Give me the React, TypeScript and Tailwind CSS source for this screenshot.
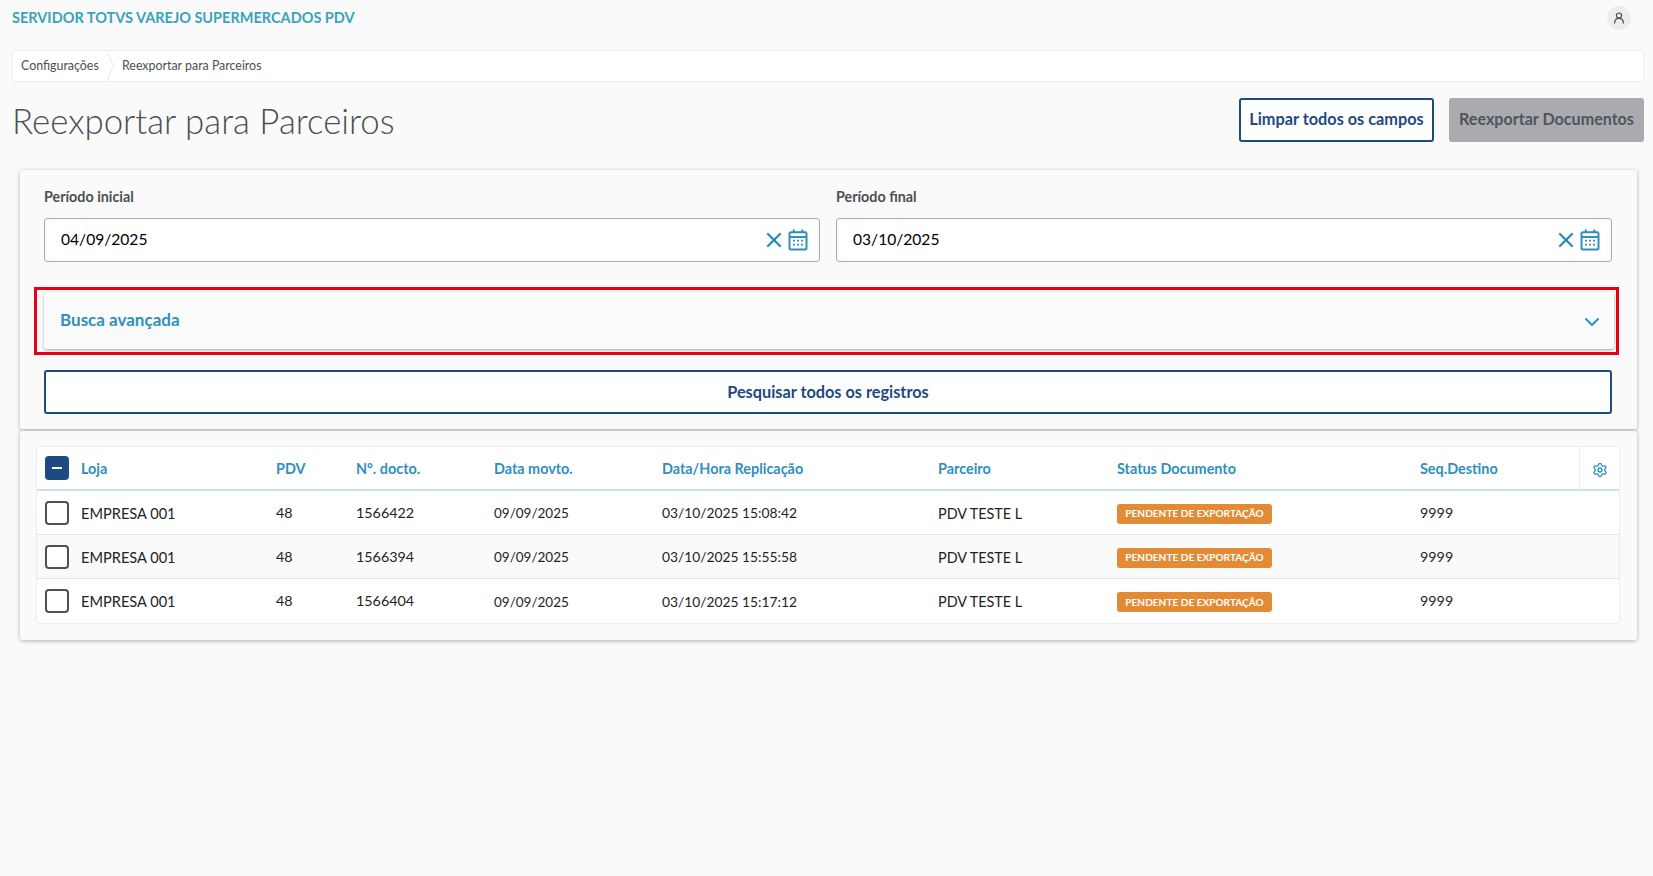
import { ChevronDown, Settings, X } from "lucide-react";

const rows = [
  { doc: "1566422", when: "03/10/2025 15:08:42", seq: "9999", bg: "bg-white" },
  { doc: "1566394", when: "03/10/2025 15:55:58", seq: "9999", bg: "bg-[#fafafa]" },
  { doc: "1566404", when: "03/10/2025 15:17:12", seq: "9999", bg: "bg-white" },
];

const CalendarIcon = () => (
  <svg width="20" height="22" viewBox="0 0 20 22" fill="none" stroke="#2f8fbd" strokeWidth="2">
    <rect x="1.5" y="3.2" width="17" height="17.3" rx="1.5" />
    <path d="M2 8h16M5.8 .6v3.4M14.2 .6v3.4" />
    <path d="M5 11.6h2M9 11.6h2M13 11.6h2M5 15.6h2M9 15.6h2M13 15.6h2" strokeWidth="1.8" />
  </svg>
);

const DateField = ({ label, value }: { label: string; value: string }) => (
  <div className="flex-1">
    <label className="block h-5 text-[14.3px] leading-5 font-bold text-[#4a5054]">{label}</label>
    <div className="mt-[11px] flex h-[44px] items-center rounded-[3px] border border-[#a5afb0] bg-white pr-[11px] pl-4 shadow-[inset_0_0_6px_rgba(0,0,0,0.06)]">
      <span className="flex-1 pb-[1px] text-[15.6px] text-black">{value}</span>
      <X size={24} strokeWidth={2.4} className="text-[#2f8fbd]" />
      <span className="ml-[2px]">
        <CalendarIcon />
      </span>
    </div>
  </div>
);

const Checkbox = ({ checked }: { checked?: boolean }) =>
  checked ? (
    <span className="flex h-6 w-6 items-center justify-center rounded-[4px] bg-[#1d4a80]">
      <span className="h-[2px] w-[10px] bg-white" />
    </span>
  ) : (
    <span className="block h-6 w-6 rounded-[4px] border-2 border-[#47535a] bg-white" />
  );

export default function App() {
  const line = (i: number) => (i < 2 ? "border-b border-[#e4e4e4]" : "");

  return (
    <div className="min-h-screen bg-[#fafafa] font-['Lato','Noto_Sans',sans-serif]">
      <header className="flex h-[35px] items-center justify-between pr-[22px] pl-[12px]">
        <span className="text-[14.5px] font-bold text-[#39a3bd]">SERVIDOR TOTVS VAREJO SUPERMERCADOS PDV</span>
        <span className="flex h-6 w-6 items-center justify-center rounded-full bg-[#ededed]">
          <svg width="12" height="12" viewBox="0 0 12 12" fill="none" stroke="#3f4a52" strokeWidth="1.2">
            <circle cx="6" cy="3.6" r="2.6" />
            <path d="M1.6 11.4c0-3.2 1.6-5 4.4-5s4.4 1.8 4.4 5" />
          </svg>
        </span>
      </header>

      <nav className="mt-[15px] mr-[9px] ml-[12px] flex h-[32px] items-center rounded-[3px] border border-[#ececec] bg-white text-[12.4px] text-[#4a5054]">
        <span className="w-[93px] pl-2">Configurações</span>
        <svg width="8" height="32" viewBox="0 0 8 32" fill="none" stroke="#e8e8e8">
          <path d="M.5 0l7 16-7 16" />
        </svg>
        <span className="ml-2">Reexportar para Parceiros</span>
      </nav>

      <div className="mt-4 mr-[9px] ml-[12px] flex h-[44px] items-center justify-between">
        <h1 className="h-[44px] pt-[1px] text-[34.8px] leading-[44px] font-light text-[#4a5054]">Reexportar para Parceiros</h1>
        <div className="flex gap-[15px]">
          <button className="h-[44px] w-[195px] rounded-[3px] border-2 border-[#1d4a80] bg-white pb-[1px] text-[16.3px] font-bold text-[#1d4a80]">
            Limpar todos os campos
          </button>
          <button className="h-[44px] w-[195px] rounded-[3px] bg-[#a9abb0] pb-[1px] text-[16.1px] font-bold text-[#50555a]">
            Reexportar Documentos
          </button>
        </div>
      </div>

      <section className="mt-[28px] mr-[16px] ml-[20px] h-[259px] rounded-[3px] bg-[#fafafa] pt-[17px] pr-[25px] pl-[24px] shadow-[0_1px_4px_rgba(0,0,0,0.3)]">
        <div className="flex gap-4">
          <DateField label="Período inicial" value="04/09/2025" />
          <DateField label="Período final" value="03/10/2025" />
        </div>

        <div className="mt-[25px] -mr-[7px] -ml-[10px] h-[68px] border-[3px] border-[#e60012] pt-[2px] pr-[2px] pl-[7px]">
          <div className="flex h-[57px] items-center justify-between rounded-[3px] bg-[#fbfbfb] pr-[10px] pb-[2px] pl-[16px] shadow-[0_1px_3px_rgba(0,0,0,0.35)]">
            <span className="text-[17px] font-bold text-[#2f8fbd]">Busca avançada</span>
            <ChevronDown size={24} strokeWidth={2} className="mt-[5px] text-[#2f8fbd]" />
          </div>
        </div>

        <button className="mt-[15px] h-[44px] w-full rounded-[3px] border-2 border-[#1d4a80] bg-white text-[16.3px] font-bold text-[#1d4a80]">
          Pesquisar todos os registros
        </button>
      </section>

      <section className="mt-[2px] mr-[16px] ml-[20px] h-[209px] rounded-[3px] bg-[#fafafa] pt-[15px] pl-[16px] shadow-[0_1px_4px_rgba(0,0,0,0.3)]">
        <table className="h-[177px] w-[1584px] table-fixed border-separate border-spacing-0 rounded-[3px] border border-[#ececec] text-[14.3px] text-[#1f2326]">
          <colgroup>
            <col className="w-[44px]" />
            <col className="w-[195px]" />
            <col className="w-[80px]" />
            <col className="w-[138px]" />
            <col className="w-[168px]" />
            <col className="w-[276px]" />
            <col className="w-[179px]" />
            <col className="w-[303px]" />
            <col className="w-[159px]" />
            <col className="w-[40px]" />
          </colgroup>
          <thead>
            <tr className="h-[44px] bg-white text-[14.4px] text-[#2f8fbd]">
              <th className="border-b-2 border-[#c5e2ee] pl-2 text-left">
                <Checkbox checked />
              </th>
              {["Loja", "PDV", "Nº. docto.", "Data movto.", "Data/Hora Replicação", "Parceiro", "Status Documento", "Seq.Destino"].map((h) => (
                <th key={h} className="border-b-2 border-[#c5e2ee] pt-[2px] text-left font-bold">
                  {h}
                </th>
              ))}
              <th className="border-b-2 border-l border-[#c5e2ee] border-l-[#ececec] text-center">
                <Settings size={16} strokeWidth={2} className="inline-block" />
              </th>
            </tr>
          </thead>
          <tbody>
            {rows.map((r, i) => (
              <tr key={r.doc} className={`h-[44px] ${r.bg}`}>
                <td className={`pl-2 ${line(i)}`}>
                  <Checkbox />
                </td>
                <td className={`pt-[2px] text-[14.6px] ${line(i)}`}>EMPRESA 001</td>
                <td className={line(i)}>48</td>
                <td className={line(i)}>{r.doc}</td>
                <td className={`pt-[2px] text-[13.5px] ${line(i)}`}>09/09/2025</td>
                <td className={`pt-[2px] text-[13.8px] ${line(i)}`}>{r.when}</td>
                <td className={`pt-[2px] text-[14.4px] ${line(i)}`}>PDV TESTE L</td>
                <td className={line(i)}>
                  <span className="inline-flex h-5 w-[155px] items-center justify-center rounded-[3px] bg-[#e38a34] text-[10.1px] font-bold text-white">
                    PENDENTE DE EXPORTAÇÃO
                  </span>
                </td>
                <td className={line(i)}>{r.seq}</td>
                <td className={line(i)} />
              </tr>
            ))}
          </tbody>
        </table>
      </section>
    </div>
  );
}
